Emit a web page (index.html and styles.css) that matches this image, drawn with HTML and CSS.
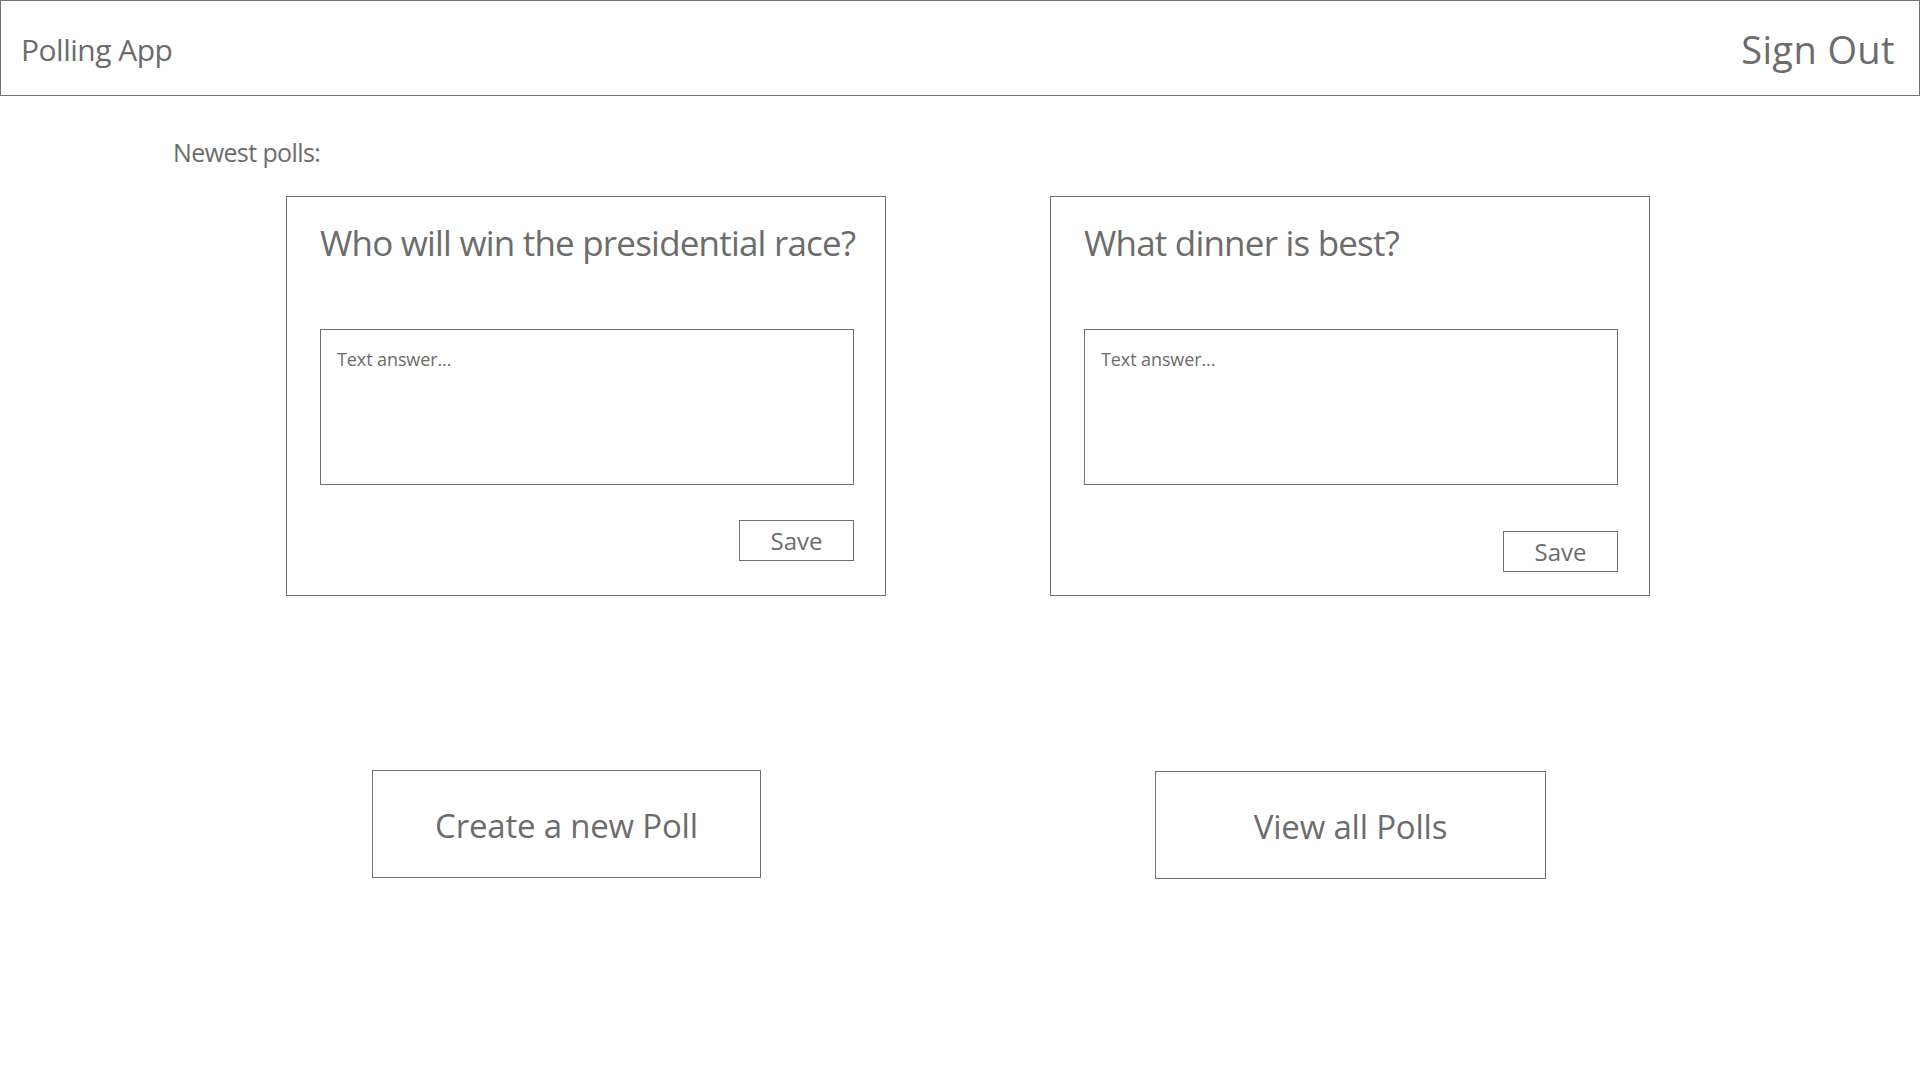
FILE: index.html
```html
<!DOCTYPE html>
<html lang="en">
<head>
<meta charset="utf-8">
<title>Polling App</title>
<link rel="stylesheet" href="styles.css">
</head>
<body>
<header class="topbar">
  <div class="brand">Polling App</div>
  <a class="signout" href="#">Sign Out</a>
</header>
<main class="main">
  <p class="section-label">Newest polls:</p>
  <div class="polls">
    <section class="poll-card">
      <h2 class="poll-title">Who will win the presidential race?</h2>
      <textarea class="answer" placeholder="Text answer..."></textarea>
      <div class="poll-actions">
        <button class="save-btn">Save</button>
      </div>
    </section>
    <section class="poll-card poll-card--low">
      <h2 class="poll-title">What dinner is best?</h2>
      <textarea class="answer" placeholder="Text answer..."></textarea>
      <div class="poll-actions">
        <button class="save-btn">Save</button>
      </div>
    </section>
  </div>
  <div class="actions">
    <button class="big-btn big-btn--create">Create a new Poll</button>
    <button class="big-btn big-btn--view">View all Polls</button>
  </div>
</main>
</body>
</html>
```
FILE: styles.css
```css
* { box-sizing: border-box; }
html, body {
  margin: 0;
  padding: 0;
  background: #fff;
}
body {
  font-family: "Open Sans", "Noto Sans", sans-serif;
  font-weight: 400;
  color: #6c6c6c;
  width: 1920px;
  height: 1080px;
  overflow: hidden;
}
.topbar {
  height: 96px;
  border: 1px solid #707070;
  display: flex;
  align-items: center;
  justify-content: space-between;
  padding: 2px 24px 0 20px;
}
.brand {
  font-size: 30px;
  letter-spacing: -0.5px;
}
.signout {
  font-size: 38px;
  letter-spacing: 0.4px;
  color: #6c6c6c;
  text-decoration: none;
}
.section-label {
  margin: 0;
  padding: 39px 0 0 173px;
  font-size: 25px;
  line-height: 34px;
  letter-spacing: -0.6px;
}
.polls {
  display: grid;
  grid-template-columns: 600px 600px;
  column-gap: 164px;
  padding-left: 286px;
  margin-top: 27px;
}
.poll-card {
  height: 400px;
  border: 1px solid #707070;
  padding: 0 31px 0 33px;
  display: flex;
  flex-direction: column;
}
.poll-title {
  margin: 0;
  padding-top: 24px;
  font-size: 35px;
  font-weight: 400;
  line-height: 44px;
  letter-spacing: -0.8px;
  white-space: nowrap;
}
.answer {
  display: block;
  width: 534px;
  height: 156px;
  margin-top: 64px;
  border: 1px solid #707070;
  border-radius: 0;
  padding: 17px 16px;
  resize: none;
  font-family: inherit;
  font-weight: 400;
  font-size: 18px;
  line-height: 24px;
  letter-spacing: -0.1px;
  color: #6c6c6c;
  background: #fff;
  outline: none;
}
.answer::placeholder {
  color: #6c6c6c;
  opacity: 1;
}
.poll-actions {
  display: flex;
  justify-content: flex-end;
  width: 534px;
  margin-top: 35px;
}
.poll-card--low .poll-actions {
  margin-top: 46px;
}
.save-btn {
  width: 115px;
  height: 41px;
  border: 1px solid #707070;
  background: #fff;
  font-family: inherit;
  font-weight: 400;
  font-size: 24px;
  color: #6c6c6c;
  padding: 0;
  border-radius: 0;
  line-height: 39px;
}
.actions {
  display: grid;
  grid-template-columns: 389px 391px;
  column-gap: 394px;
  padding-left: 372px;
  margin-top: 174px;
  align-items: start;
}
.big-btn {
  height: 108px;
  border: 1px solid #707070;
  background: #fff;
  font-family: inherit;
  font-weight: 400;
  font-size: 33px;
  color: #6c6c6c;
  padding: 3px 0 0;
  border-radius: 0;
  letter-spacing: -0.2px;
}
.big-btn--view {
  margin-top: 1px;
}
```
